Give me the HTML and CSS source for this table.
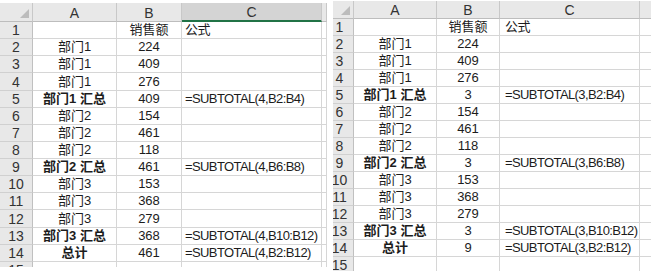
FILE: index.html
```html
<!DOCTYPE html>
<html lang="zh">
<head>
<meta charset="utf-8">
<link rel="stylesheet" href="styles.css">
</head>
<body>
<div class="page">
  <div class="sheet sheet-left">
    <div class="grid grid-left">
      <div class="h corner"><span class="tri"></span></div>
      <div class="h">A</div>
      <div class="h">B</div>
      <div class="h sel">C</div>
      <div class="h"></div>

      <div class="rh">1</div><div class="c ca"></div><div class="c cb">销售额</div><div class="c cc">公式</div><div class="c"></div>
      <div class="rh">2</div><div class="c ca">部门1</div><div class="c cb">224</div><div class="c cc"></div><div class="c"></div>
      <div class="rh">3</div><div class="c ca">部门1</div><div class="c cb">409</div><div class="c cc"></div><div class="c"></div>
      <div class="rh">4</div><div class="c ca">部门1</div><div class="c cb">276</div><div class="c cc"></div><div class="c"></div>
      <div class="rh">5</div><div class="c ca b">部门1 汇总</div><div class="c cb">409</div><div class="c cc">=SUBTOTAL(4,B2:B4)</div><div class="c"></div>
      <div class="rh">6</div><div class="c ca">部门2</div><div class="c cb">154</div><div class="c cc"></div><div class="c"></div>
      <div class="rh">7</div><div class="c ca">部门2</div><div class="c cb">461</div><div class="c cc"></div><div class="c"></div>
      <div class="rh">8</div><div class="c ca">部门2</div><div class="c cb">118</div><div class="c cc"></div><div class="c"></div>
      <div class="rh">9</div><div class="c ca b">部门2 汇总</div><div class="c cb">461</div><div class="c cc">=SUBTOTAL(4,B6:B8)</div><div class="c"></div>
      <div class="rh">10</div><div class="c ca">部门3</div><div class="c cb">153</div><div class="c cc"></div><div class="c"></div>
      <div class="rh">11</div><div class="c ca">部门3</div><div class="c cb">368</div><div class="c cc"></div><div class="c"></div>
      <div class="rh">12</div><div class="c ca">部门3</div><div class="c cb">279</div><div class="c cc"></div><div class="c"></div>
      <div class="rh">13</div><div class="c ca b">部门3 汇总</div><div class="c cb">368</div><div class="c cc">=SUBTOTAL(4,B10:B12)</div><div class="c"></div>
      <div class="rh">14</div><div class="c ca b">总计</div><div class="c cb">461</div><div class="c cc">=SUBTOTAL(4,B2:B12)</div><div class="c"></div>
      <div class="rh">15</div><div class="c ca"></div><div class="c cb"></div><div class="c cc"></div><div class="c"></div>
    </div>
  </div>

  <div class="sheet sheet-right">
    <div class="grid grid-right">
      <div class="h corner"><span class="tri"></span></div>
      <div class="h">A</div>
      <div class="h">B</div>
      <div class="h">C</div>
      <div class="h"></div>

      <div class="rh">1</div><div class="c ca"></div><div class="c cb">销售额</div><div class="c cc">公式</div><div class="c"></div>
      <div class="rh">2</div><div class="c ca">部门1</div><div class="c cb">224</div><div class="c cc"></div><div class="c"></div>
      <div class="rh">3</div><div class="c ca">部门1</div><div class="c cb">409</div><div class="c cc"></div><div class="c"></div>
      <div class="rh">4</div><div class="c ca">部门1</div><div class="c cb">276</div><div class="c cc"></div><div class="c"></div>
      <div class="rh">5</div><div class="c ca b">部门1 汇总</div><div class="c cb">3</div><div class="c cc">=SUBTOTAL(3,B2:B4)</div><div class="c"></div>
      <div class="rh">6</div><div class="c ca">部门2</div><div class="c cb">154</div><div class="c cc"></div><div class="c"></div>
      <div class="rh">7</div><div class="c ca">部门2</div><div class="c cb">461</div><div class="c cc"></div><div class="c"></div>
      <div class="rh">8</div><div class="c ca">部门2</div><div class="c cb">118</div><div class="c cc"></div><div class="c"></div>
      <div class="rh">9</div><div class="c ca b">部门2 汇总</div><div class="c cb">3</div><div class="c cc">=SUBTOTAL(3,B6:B8)</div><div class="c"></div>
      <div class="rh">10</div><div class="c ca">部门3</div><div class="c cb">153</div><div class="c cc"></div><div class="c"></div>
      <div class="rh">11</div><div class="c ca">部门3</div><div class="c cb">368</div><div class="c cc"></div><div class="c"></div>
      <div class="rh">12</div><div class="c ca">部门3</div><div class="c cb">279</div><div class="c cc"></div><div class="c"></div>
      <div class="rh">13</div><div class="c ca b">部门3 汇总</div><div class="c cb">3</div><div class="c cc">=SUBTOTAL(3,B10:B12)</div><div class="c"></div>
      <div class="rh">14</div><div class="c ca b">总计</div><div class="c cb">9</div><div class="c cc">=SUBTOTAL(3,B2:B12)</div><div class="c"></div>
      <div class="rh">15</div><div class="c ca"></div><div class="c cb"></div><div class="c cc"></div><div class="c"></div>
    </div>
  </div>
</div>
</body>
</html>
```

FILE: styles.css
```css
html, body {
  margin: 0;
  padding: 0;
  background: #ffffff;
}

.page {
  width: 651px;
  height: 271px;
  display: flex;
  align-items: flex-start;
  overflow: hidden;
  font-family: "Liberation Sans", "Noto Sans CJK SC", sans-serif;
  font-size: 13px;
  color: #1c1c1c;
}

.sheet {
  overflow: hidden;
  flex: none;
}

.sheet-left {
  width: 327px;
  height: 264px;
  margin-top: 3px;
}

.sheet-right {
  width: 318px;
  height: 270px;
  margin-top: 1px;
  margin-left: 6px;
}

.grid {
  display: grid;
}

.grid-left {
  grid-template-columns: 33px 84px 65px 140px 5px;
  grid-template-rows: 19px repeat(15, 17.14px);
}

.grid-right {
  margin-left: -7px;
  grid-template-columns: 28px 83px 63px 140px 40px;
  grid-template-rows: 18px repeat(15, 17px);
}

.h,
.rh,
.c {
  box-sizing: border-box;
  border-right: 1px solid #d6d6d6;
  border-bottom: 1px solid #d6d6d6;
  display: flex;
  align-items: flex-end;
  line-height: 14px;
  padding-bottom: 1px;
  white-space: nowrap;
  overflow: hidden;
}

.h {
  background: #e8e8e8;
  border-right-color: #c8c8c8;
  border-bottom-color: #bdbdbd;
  justify-content: center;
  color: #333;
  font-size: 14px;
}

.h.sel {
  background: #d4d4d4;
  border-bottom: 2px solid #217346;
}

.corner {
  position: relative;
}

.tri {
  position: absolute;
  right: 3px;
  bottom: 3px;
  width: 0;
  height: 0;
  border-left: 9px solid transparent;
  border-bottom: 9px solid #bcbcbc;
}

.rh {
  background: #e8e8e8;
  border-right-color: #c0c0c0;
  border-bottom-color: #d0d0d0;
  justify-content: center;
  color: #333;
  font-size: 14px;
}

.ca,
.cb {
  justify-content: center;
}

.cc {
  padding-left: 3px;
  letter-spacing: -0.6px;
}

.grid-right .cc {
  padding-left: 5px;
}

.b {
  font-weight: bold;
}
```
